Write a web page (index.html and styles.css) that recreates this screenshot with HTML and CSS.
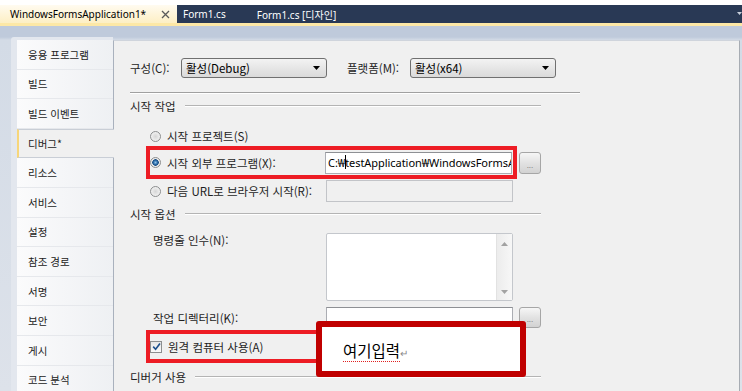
FILE: index.html
```html
<!DOCTYPE html>
<html lang="ko">

<head>
    <meta charset="UTF-8">
    <meta name="viewport" content="width=device-width, initial-scale=1.0">
    <title>WindowsFormsApplication1 - 디버그</title>
    <link rel="stylesheet" href="styles.css">
</head>

<body>
    <!-- Document tabs -->
    <div class="tabbar">
        <div class="tab active">
            <span>WindowsFormsApplication1*</span>
            <svg class="tab-close" width="9" height="9" viewBox="0 0 9 9">
                <path d="M1 1 L8 8 M8 1 L1 8" stroke="#5a5a5a" stroke-width="1.3" />
            </svg>
        </div>
        <div class="tab">Form1.cs</div>
        <div class="tab">Form1.cs [디자인]</div>
        <svg class="tab-menu" width="5" height="4" viewBox="0 0 5 4">
            <path d="M0 0 H5 L2.5 3 Z" fill="#c8d0dc" />
        </svg>
    </div>
    <div class="tab-underline"></div>
    <div class="toolband"></div>

    <div class="workspace">
        <!-- Property page list -->
        <nav class="sidebar">
            <div class="side-item">응용 프로그램</div>
            <div class="side-item">빌드</div>
            <div class="side-item">빌드 이벤트</div>
            <div class="side-item selected">디버그*</div>
            <div class="side-item">리소스</div>
            <div class="side-item">서비스</div>
            <div class="side-item">설정</div>
            <div class="side-item">참조 경로</div>
            <div class="side-item">서명</div>
            <div class="side-item">보안</div>
            <div class="side-item">게시</div>
            <div class="side-item">코드 분석</div>
        </nav>

        <!-- Debug page -->
        <main class="panel">
            <div class="config-row">
                <span class="config-label">구성(C):</span>
                <div class="combo">활성(Debug)<svg width="7" height="4" viewBox="0 0 7 4"><path d="M0 0 H7 L3.5 4 Z" /></svg></div>
                <span class="config-label platform">플랫폼(M):</span>
                <div class="combo">활성(x64)<svg width="7" height="4" viewBox="0 0 7 4"><path d="M0 0 H7 L3.5 4 Z" /></svg></div>
            </div>
            <div class="divider"></div>

            <div class="section">
                <span>시작 작업</span>
                <i></i>
            </div>

            <div class="row first-radio">
                <span class="radio"></span>
                <label>시작 프로젝트(S)</label>
            </div>

            <div class="row-wrap">
                <div class="row marked">
                    <div class="label-col">
                        <span class="radio on"></span>
                        <label>시작 외부 프로그램(X):</label>
                    </div>
                    <div class="textbox">C:₩<span class="caret"></span>testApplication₩WindowsFormsA</div>
                </div>
                <div class="browse">...</div>
            </div>

            <div class="row url-row">
                <div class="label-col">
                    <span class="radio"></span>
                    <label>다음 URL로 브라우저 시작(R):</label>
                </div>
                <div class="textbox disabled"></div>
            </div>

            <div class="section">
                <span>시작 옵션</span>
                <i></i>
            </div>

            <div class="row args-row">
                <div class="label-col plain">명령줄 인수(N):</div>
                <div class="textarea">
                    <div class="scrollbar">
                        <svg width="7" height="4" viewBox="0 0 7 4"><path d="M0 4 H7 L3.5 0 Z" /></svg>
                        <svg width="7" height="4" viewBox="0 0 7 4"><path d="M0 0 H7 L3.5 4 Z" /></svg>
                    </div>
                </div>
            </div>

            <div class="row dir-row">
                <div class="label-col plain">작업 디렉터리(K):</div>
                <div class="textbox"></div>
                <div class="browse">...</div>
            </div>

            <div class="row marked remote-row">
                <span class="checkbox">
                    <svg width="9" height="9" viewBox="0 0 9 9">
                        <path d="M1.2 4.6 L3.6 7.2 L8 1.4" fill="none" stroke="#1c4f8c" stroke-width="1.6" />
                    </svg>
                </span>
                <label>원격 컴퓨터 사용(A)</label>
            </div>

            <div class="section last">
                <span>디버거 사용</span>
                <i></i>
            </div>

            <!-- Annotation callout -->
            <div class="callout"><span class="typed">여기입력</span><span class="para">↵</span></div>
        </main>
    </div>
</body>

</html>
```

FILE: styles.css
```css
/* Reset */
* {
    margin: 0;
    padding: 0;
    box-sizing: border-box;
}

:root {
    --navy: #293955;
    --band: #bfcadb;
    --panel: #f0f0f0;
    --etch: #a0a0a0;
    --mark: #ed1c24;
    --callout: #c00000;
}

body {
    width: 742px;
    height: 391px;
    overflow: hidden;
    background: #fff;
    font-family: "Noto Sans CJK KR", sans-serif;
    font-size: 11.5px;
    color: #1e1e1e;
}

/* Document tabs */
.tabbar {
    margin-top: 5px;
    height: 18px;
    display: flex;
    align-items: center;
    background: var(--navy);
    font-family: "Noto Sans", "Noto Sans CJK KR", sans-serif;
    font-size: 10px;
}

.tab {
    height: 18px;
    display: flex;
    align-items: center;
    padding: 0 25px 0 6px;
    color: #fff;
}

.tab.active {
    width: 177px;
    padding: 0 0 0 10px;
    color: #000;
    background: linear-gradient(#fffbf0, #fdefc4);
}

.tab-close {
    margin-left: auto;
    margin-right: 7px;
}

.tab-menu {
    margin-left: auto;
}

.tab-underline {
    height: 3px;
    background: #fde8a6;
}

.toolband {
    height: 11px;
    background: var(--band);
}

/* Workspace */
.workspace {
    display: flex;
    height: 354px;
    padding-left: 11px;
    background: linear-gradient(var(--band), #d3dbe6 3px, #dde2ea);
}

.sidebar {
    width: 102px;
    padding: 3px 0 0 6px;
    background: #e3e7ee;
    border-top-left-radius: 3px;
}

.side-item {
    height: 29.6px;
    display: flex;
    align-items: center;
    padding-left: 11px;
    font-size: 10.5px;
    color: #222;
    background: linear-gradient(to right, #fbfbfc, #eef0f3);
    border-bottom: 1px solid #e6e8ec;
}

.side-item.selected {
    position: relative;
    z-index: 1;
    margin-right: -1px;
    padding-left: 9px;
    background: var(--panel);
    border-left: 2px solid #f7d67a;
    border-top: 1px solid #c9ced6;
    border-bottom: 1px solid #c9ced6;
}

/* Main panel */
.panel {
    position: relative;
    flex: 1;
    margin: 3px 2px 0 0;
    padding: 17px 0 0 16px;
    background: var(--panel);
    border-left: 1px solid #a9b1bd;
    border-top: 1px solid #cfd4dc;
    border-right: 1px solid #a7acb3;
}

.config-row {
    height: 20px;
    display: flex;
    align-items: center;
}

.config-label {
    width: 51px;
}

.config-label.platform {
    width: 63px;
    margin-left: 20px;
}

.combo {
    width: 146px;
    height: 20px;
    display: flex;
    align-items: center;
    justify-content: space-between;
    padding: 0 6px 0 4px;
    border: 1px solid #707070;
    border-radius: 3px;
    background: linear-gradient(#f3f3f3, #e6e6e6 50%, #dadada);
    color: #000;
}

.combo svg {
    fill: #000;
}

.divider {
    width: 450px;
    margin-top: 14px;
    border-top: 1px solid var(--etch);
    border-bottom: 1px solid #fff;
}

.section {
    width: 411px;
    height: 20px;
    margin-top: 2px;
    display: flex;
    align-items: center;
    gap: 9px;
}

.section i {
    flex: 1;
    border-top: 1px solid #b4b4b4;
    border-bottom: 1px solid #fff;
}

/* Form rows */
.row {
    display: flex;
    align-items: center;
    margin-left: 16px;
    padding-left: 4px;
}

.row label {
    margin-left: 6px;
    white-space: nowrap;
}

.label-col {
    width: 175px;
    display: flex;
    align-items: center;
}

.label-col.plain {
    padding-left: 3px;
}

.first-radio {
    height: 20px;
    margin-top: 10px;
}

.row-wrap {
    display: flex;
    align-items: center;
}

.row.marked {
    height: 33px;
    padding-left: 0;
    border: 4px solid var(--mark);
}

.row-wrap .row.marked {
    width: 371px;
}

.url-row {
    height: 22px;
    margin-top: 1px;
}

.url-row .textbox {
    margin-left: 1px;
}

.args-row {
    height: 68px;
    margin-top: 9px;
    align-items: flex-start;
}

.args-row .label-col {
    line-height: 14px;
}

.dir-row {
    height: 21px;
    margin-top: 6px;
}

.remote-row {
    width: 190px;
    margin-top: 2px;
}

.section.last {
    margin-top: 4px;
}

/* Controls */
.radio {
    flex: none;
    width: 11px;
    height: 11px;
    border-radius: 50%;
    border: 1px solid #8c8e8f;
    background: radial-gradient(circle, #d6d6d6 0, #f4f4f4 80%);
}

.radio.on {
    background: radial-gradient(circle, #8fc2ea 0, #2a6aa6 2px, #1d4f84 3px, #e8e8e8 3.5px, #f6f6f6 100%);
}

.checkbox {
    flex: none;
    width: 12px;
    height: 12px;
    display: flex;
    align-items: center;
    justify-content: center;
    border: 1px solid #8c8e8f;
    background: linear-gradient(#e6e6e6, #fafafa);
}

.textbox {
    width: 187px;
    height: 22px;
    padding: 0 2px;
    overflow: hidden;
    white-space: nowrap;
    background: #fff;
    border: 1px solid #abadb3;
    border-top-color: #8e9094;
    font-family: "Noto Sans", "Noto Sans CJK KR", sans-serif;
    font-size: 11px;
    letter-spacing: -0.05px;
    line-height: 20px;
    color: #000;
}

.textbox.disabled {
    background: var(--panel);
    border-color: #c2c4c8;
}

.dir-row .textbox {
    height: 21px;
    margin-left: 1px;
}

.caret {
    display: inline-block;
    width: 1px;
    height: 14px;
    margin-right: -1px;
    vertical-align: -2px;
    background: #000;
}

.browse {
    width: 22px;
    height: 21px;
    margin-left: 6px;
    display: flex;
    align-items: flex-end;
    justify-content: center;
    padding-bottom: 4px;
    font-size: 8px;
    line-height: 8px;
    color: #8a8a8a;
    border: 1px solid #a6a6a6;
    border-radius: 3px;
    background: linear-gradient(#f6f6f6, #e2e2e2 50%, #d2d2d2);
}

.row-wrap .browse {
    height: 22px;
    margin-left: 2px;
}

.textarea {
    width: 187px;
    height: 68px;
    margin-left: 1px;
    display: flex;
    justify-content: flex-end;
    background: #fff;
    border: 1px solid #c4c7cc;
    border-radius: 2px;
}

.scrollbar {
    width: 16px;
    display: flex;
    flex-direction: column;
    justify-content: space-between;
    align-items: center;
    padding: 8px 0 6px;
    background: linear-gradient(to right, #ececec, #f7f7f7);
    border-left: 1px solid #e2e2e2;
}

.scrollbar svg {
    fill: #a2a2a2;
}

/* Annotation */
.callout {
    position: absolute;
    left: 202px;
    top: 280px;
    width: 210px;
    height: 56px;
    padding: 12px 0 0 21px;
    background: #fff;
    border: 6px solid var(--callout);
    border-radius: 3px;
    font-size: 15.5px;
    line-height: 22px;
    color: #000;
}

.typed {
    border-bottom: 1px dotted #e02020;
}

.para {
    font-size: 10px;
    color: #8a8a8a;
}
```
